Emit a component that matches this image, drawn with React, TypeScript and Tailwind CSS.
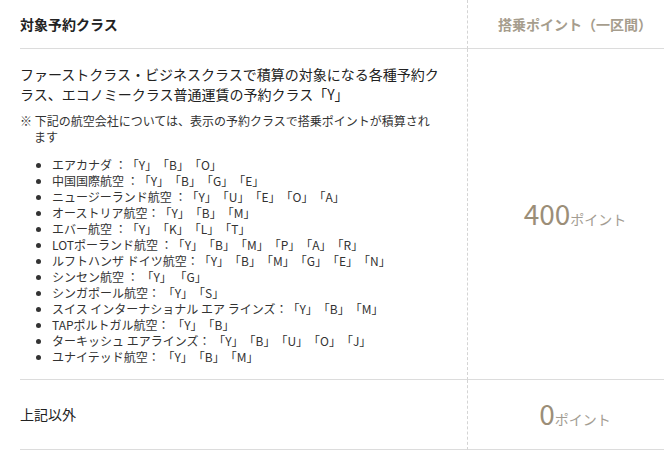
const airlines = [
    "エアカナダ ：「Y」「B」「O」",
    "中国国際航空 ：「Y」「B」「G」「E」",
    "ニュージーランド航空 ：「Y」「U」「E」「O」「A」",
    "オーストリア航空：「Y」「B」「M」",
    "エバー航空 ：「Y」「K」「L」「T」",
    "LOTポーランド航空 ：「Y」「B」「M」「P」「A」「R」",
    "ルフトハンザ ドイツ航空：「Y」「B」「M」「G」「E」「N」",
    "シンセン航空 ： 「Y」 「G」",
    "シンガポール航空： 「Y」「S」",
    "スイス インターナショナル エア ラインズ：「Y」「B」「M」",
    "TAPポルトガル航空： 「Y」「B」",
    "ターキッシュ エアラインズ： 「Y」「B」「U」「O」「J」",
    "ユナイテッド航空： 「Y」「B」「M」",
]

function Points({ value }: { value: string }) {
    return (
        <div className="flex items-baseline justify-center text-[#9b8e78]">
            <span className="text-[28px] leading-none">{value}</span>
            <span className="text-[14px] text-[#a39d93]">ポイント</span>
        </div>
    )
}

export default function App() {
    return (
        <div
            className="w-[664px] h-[451px] overflow-hidden bg-white text-[#222] [text-spacing-trim:space-all]"
            style={{ fontFamily: '"Noto Sans CJK JP", "Noto Sans", sans-serif' }}
        >
            <div className="ml-[20px] w-[662px] grid grid-cols-[447px_215px]">
                {/* header */}
                <div className="h-[49px] flex items-center border-b border-[#dcdcdc] text-[14px] font-bold">
                    対象予約クラス
                </div>
                <div className="h-[49px] flex items-center justify-center border-b border-l border-[#dcdcdc] [border-left-style:dashed] border-l-[#d4d4d4] text-[14px] font-bold text-[#a69d8d]">
                    搭乗ポイント（一区間）
                </div>

                {/* row 1 */}
                <div className="h-[331px] pt-[15px] border-b border-[#dcdcdc]">
                    <p className="text-[14px] leading-[20px] text-[#222]">
                        ファーストクラス・ビジネスクラスで積算の対象になる各種予約ク<br />
                        ラス、エコノミークラス普通運賃の予約クラス「Y」
                    </p>
                    <p className="mt-[9px] pl-[14px] -indent-[14px] text-[12px] leading-[16px] text-[#333]">
                        ※ 下記の航空会社については、表示の予約クラスで搭乗ポイントが積算され<br />
                        ます
                    </p>
                    <ul className="mt-[12px] pl-[32px] list-disc text-[12px] leading-[16px] text-[#333]">
                        {airlines.map((a) => (
                            <li key={a}>{a}</li>
                        ))}
                    </ul>
                </div>
                <div className="h-[331px] flex items-center justify-center border-b border-l border-[#dcdcdc] [border-left-style:dashed] border-l-[#d4d4d4]">
                    <Points value="400" />
                </div>

                {/* row 2 */}
                <div className="h-[70px] flex items-center border-b border-[#dcdcdc] text-[14px]">
                    上記以外
                </div>
                <div className="h-[70px] flex items-center justify-center border-b border-l border-[#dcdcdc] [border-left-style:dashed] border-l-[#d4d4d4]">
                    <Points value="0" />
                </div>
            </div>
        </div>
    )
}
